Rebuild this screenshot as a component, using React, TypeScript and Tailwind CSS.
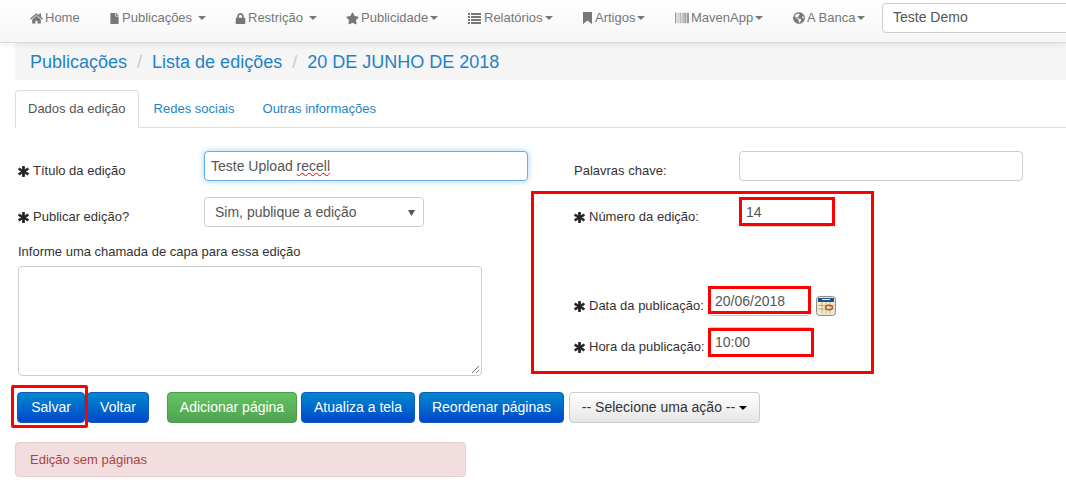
import React from "react";
import { FaHome, FaFile, FaLock, FaStar, FaBarcode, FaGlobeAmericas, FaAsterisk } from "react-icons/fa";

function Caret({ cls = "" }: { cls?: string }) {
  return <span className={"inline-block w-0 h-0 border-x-[4px] border-x-transparent border-t-[4px] border-t-[#777] " + cls} />;
}

function Bookmark() {
  return (
    <svg width="11" height="12" viewBox="0 0 11 12" fill="currentColor" className="shrink-0">
      <path d="M1 0H10V12L5.5 8.5L1 12Z" />
    </svg>
  );
}

function ListIcon() {
  return (
    <svg width="15" height="11" viewBox="0 0 15 11" fill="currentColor" className="shrink-0">
      <path d="M1 0H3V2H1ZM4 0H14V2H4ZM1 3H3V5H1ZM4 3H14V5H4ZM1 6H3V8H1ZM4 6H14V8H4ZM1 9H3V11H1ZM4 9H14V11H4Z" />
    </svg>
  );
}

const nav = [
  { icon: <FaHome size={13} />, label: "Home", w: "w-[109px] pl-[30px]", caret: null },
  { icon: <FaFile size={11} />, label: "Publicações", w: "w-[126px]", caret: "ml-[4px]" },
  { icon: <FaLock size={11} />, label: "Restrição", w: "w-[111px]", caret: "ml-[4px]" },
  { icon: <FaStar size={13} />, label: "Publicidade", w: "w-[121px]", caret: "ml-[0px]" },
  { icon: <ListIcon />, label: "Relatórios", w: "w-[115px]", caret: "ml-[0px]" },
  { icon: <Bookmark />, label: "Artigos", w: "w-[93px]", caret: "ml-[0px]" },
  { icon: <FaBarcode size={14} />, label: "MavenApp", w: "w-[118px]", caret: "ml-[0px]" },
  { icon: <FaGlobeAmericas size={12} />, label: "A Banca", w: "w-[89px]", caret: "ml-[0px]" },
];

function Req({ children }: { children: React.ReactNode }) {
  return (
    <span className="flex items-center text-[#333] whitespace-nowrap">
      <FaAsterisk size={11} stroke="currentColor" strokeWidth={40} className="mr-[4px] text-[#222]" />
      {children}
    </span>
  );
}

function Field({ children, cls }: { children?: React.ReactNode; cls: string }) {
  return <div className={"h-[30px] flex items-center px-[6px] bg-white border border-[#ccc] rounded-[4px] text-[14px] text-[#555] whitespace-nowrap " + cls}>{children}</div>;
}

function Btn({ children, cls = "" }: { children: React.ReactNode; cls?: string }) {
  return (
    <button className={"h-[31px] px-0 whitespace-nowrap rounded-[4px] text-white text-[14px] border border-[#0a5cb8] bg-gradient-to-b from-[#0088cc] to-[#0044cc] " + cls}>
      {children}
    </button>
  );
}

function RedBox({ cls }: { cls: string }) {
  return <div className={"absolute border-[3px] border-[#fe0000] " + cls} />;
}

export default function App() {
  return (
    <div className="relative w-[1066px] h-[498px] overflow-hidden bg-white text-[13px] text-[#333] font-['Liberation_Sans',Arial,sans-serif]">
      <header className="h-[43px] flex items-center bg-gradient-to-b from-white to-[#f6f6f6] border-b border-[#d9d9d9] shadow-[0_2px_6px_rgba(0,0,0,0.07)] relative z-10">
        <nav className="flex shrink-0 text-[#777] -mt-[6px]">
          {nav.map((n) => (
            <a key={n.label} className={"flex items-center shrink-0 gap-[2px] text-[13px] whitespace-nowrap " + n.w}>
              {n.icon}
              <span>{n.label}</span>
              {n.caret && <Caret cls={n.caret} />}
            </a>
          ))}
        </nav>
        <div className="shrink-0 w-[300px] h-[30px] -mt-[7px] flex items-center px-[10px] bg-white border border-[#ccc] rounded-[4px] text-[14px] text-[#555]">Teste Demo</div>
      </header>

      <main className="pl-[15px]">
        <div className="h-[37px] flex items-center pt-[1px] pl-[15px] bg-[#f5f5f5] rounded-l-[4px] text-[18px] text-[#1f83c9]">
          <span>Publicações</span>
          <span className="px-[10px] text-[#ccc]">/</span>
          <span>Lista de edições</span>
          <span className="px-[10px] text-[#ccc]">/</span>
          <span>20 DE JUNHO DE 2018</span>
        </div>

        <div className="mt-[10px] h-[38px] flex border-b border-[#ddd] text-[13px]">
          <div className="h-[38px] px-[12px] flex items-center bg-white border border-[#ddd] border-b-white rounded-t-[4px] text-[#555]">Dados da edição</div>
          <div className="h-[37px] pl-[15px] pr-[14px] flex items-center text-[#1f83c9]">Redes sociais</div>
          <div className="h-[37px] px-[14px] flex items-center text-[#1f83c9]">Outras informações</div>
        </div>

        <div className="flex -ml-[15px]">
          <section className="w-[574px] shrink-0 pl-[18px] pt-[23px]">
            <div className="flex items-center h-[30px]">
              <div className="w-[186px] pt-[10px]"><Req>Título da edição</Req></div>
              <div className="w-[324px] h-[30px] flex items-center px-[6px] bg-white border border-[#66afe9] rounded-[4px] text-[14px] text-[#555] shadow-[0_0_6px_rgba(102,175,233,0.6)]">
                <span>Teste Upload <span className="underline decoration-wavy decoration-[#e00] decoration-1">recell</span></span>
              </div>
            </div>
            <div className="flex items-center h-[30px] mt-[16px]">
              <div className="w-[186px] pt-[10px]"><Req>Publicar edição?</Req></div>
              <div className="w-[220px] h-[30px] flex items-center justify-between pl-[10px] pr-[8px] bg-white border border-[#ccc] rounded-[4px] text-[14px] text-[#555]">
                <span>Sim, publique a edição</span>
                <svg width="7" height="7" viewBox="0 0 7 7"><polygon points="0,1 7,1 3.5,7" fill="#555" /></svg>
              </div>
            </div>
            <div className="mt-[17px] h-[16px] leading-[16px] text-[13px]">Informe uma chamada de capa para essa edição</div>
            <div className="relative mt-[6px] w-[464px] h-[110px] bg-white border border-[#ccc] rounded-[4px]">
              <svg className="absolute right-[1px] bottom-[1px]" width="9" height="9" viewBox="0 0 9 9"><path d="M1 8 L8 1 M5 8 L8 5" stroke="#777" strokeWidth="1" fill="none" /></svg>
            </div>
          </section>

          <section className="flex-1 pt-[23px] relative">
            <div className="flex items-center h-[30px]">
              <div className="w-[165px] pt-[10px] whitespace-nowrap">Palavras chave:</div>
              <Field cls="w-[284px]" />
            </div>
            <div className="flex items-center h-[30px] mt-[16px]">
              <div className="w-[165px] pt-[10px]"><Req>Número da edição:</Req></div>
              <Field cls="w-[94px]">14</Field>
            </div>
            <div className="flex items-center h-[30px] mt-[59px]">
              <div className="w-[134px] pt-[10px]"><Req>Data da publicação:</Req></div>
              <Field cls="w-[103px]">20/06/2018</Field>
              <svg className="ml-[5px] mt-[10px]" width="20" height="20" viewBox="0 0 20 20">
                <rect x="0.5" y="0.5" width="19" height="19" rx="3" fill="#e3e3e3" stroke="#8f8f8f" />
                <rect x="2" y="2" width="16" height="4" fill="#1d4f8f" />
                <rect x="6" y="3" width="8" height="1" fill="#fff" />
                <rect x="2" y="6" width="16" height="11" fill="#f5efc0" />
                <path d="M2 9.5H18M2 13H18M6 6V17M10 6V17M14 6V17" stroke="#999" strokeWidth="0.7" />
                <ellipse cx="13" cy="11.5" rx="3.5" ry="2.2" fill="none" stroke="#d8481c" strokeWidth="1.4" />
              </svg>
            </div>
            <div className="flex items-center h-[30px] mt-[11px]">
              <div className="w-[134px] pt-[10px]"><Req>Hora da publicação:</Req></div>
              <Field cls="w-[106px]">10:00</Field>
            </div>
          </section>
        </div>

        <div className="flex items-center mt-[16px] ml-[2px]">
          <Btn cls="w-[68px] mr-[2px]">Salvar</Btn>
          <Btn cls="w-[62px] mr-[18px]">Voltar</Btn>
          <button className="h-[31px] w-[130px] mr-[4px] whitespace-nowrap rounded-[4px] text-white text-[14px] border border-[#4a9c4a] bg-gradient-to-b from-[#62c462] to-[#51a351]">Adicionar página</button>
          <Btn cls="w-[114px] mr-[4px]">Atualiza a tela</Btn>
          <Btn cls="w-[145px] mr-[5px]">Reordenar páginas</Btn>
          <button className="h-[31px] w-[191px] flex items-center justify-center whitespace-nowrap rounded-[4px] text-[#333] text-[14px] border border-[#ccc] bg-gradient-to-b from-white to-[#e6e6e6]">
            -- Selecione uma ação --
            <span className="ml-[4px] inline-block w-0 h-0 border-x-[4px] border-x-transparent border-t-[4px] border-t-black" />
          </button>
        </div>

        <div className="mt-[19px] w-[451px] h-[35px] flex items-center pl-[14px] bg-[#f2dede] border border-[#ebccd1] rounded-[4px] text-[13px] text-[#a94442]">Edição sem páginas</div>
      </main>

      <RedBox cls="left-[531px] top-[191px] w-[343px] h-[183px]" />
      <RedBox cls="left-[739px] top-[197px] w-[96px] h-[29px]" />
      <RedBox cls="left-[708px] top-[286px] w-[103px] h-[28px]" />
      <RedBox cls="left-[708px] top-[328px] w-[106px] h-[29px]" />
      <RedBox cls="left-[11px] top-[385px] w-[77px] h-[43px] rounded-[2px]" />
    </div>
  );
}
